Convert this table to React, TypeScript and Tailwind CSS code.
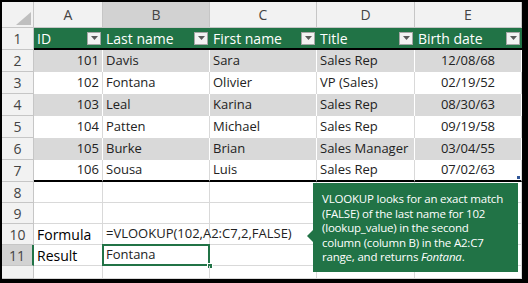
import React from "react";

const rows: [number, string, string, string, string][] = [
  [101, "Davis", "Sara", "Sales Rep", "12/08/68"],
  [102, "Fontana", "Olivier", "VP (Sales)", "02/19/52"],
  [103, "Leal", "Karina", "Sales Rep", "08/30/63"],
  [104, "Patten", "Michael", "Sales Rep", "09/19/58"],
  [105, "Burke", "Brian", "Sales Manager", "03/04/55"],
  [106, "Sousa", "Luis", "Sales Rep", "07/02/63"],
];

const headers = ["ID", "Last name", "First name", "Title", "Birth date"];

const FilterButton = () => (
  <span className="ml-auto mr-[2px] flex h-[13px] w-[14px] shrink-0 items-center justify-center border border-[#a6a6a6] bg-[#f2f2f2]">
    <svg width="7" height="4" viewBox="0 0 7 4">
      <path d="M0 0h7L3.5 4z" fill="#595959" />
    </svg>
  </span>
);

const RowHead = ({ n, selected }: { n: number | string; selected?: boolean }) => (
  <div
    className={
      selected
        ? "flex items-center justify-center border-b border-r-2 border-b-[#c6c6c6] border-r-[#217346] bg-[#d2d2d2] text-[14px] text-[#444]"
        : "flex items-center justify-center border-b border-r border-[#c6c6c6] bg-[#f2f2f2] text-[14px] text-[#444]"
    }
  >
    {n}
  </div>
);

export default function App() {
  return (
    <div className="relative h-[283px] w-[528px] overflow-hidden border-b-4 border-l-2 border-r-[6px] border-t-2 border-black bg-white font-['Open_Sans','Noto_Sans',sans-serif] text-[#222]">
      <div className="grid grid-cols-[32px_69px_107px_107px_98px_107px] grid-rows-[26px_repeat(7,22px)_repeat(4,21px)_13px]">
        {/* column letters */}
        <div className="relative border-b border-r border-[#c6c6c6] bg-[#f2f2f2]">
          <span className="absolute bottom-[2px] right-[2px] h-0 w-0 border-b-[13px] border-l-[15px] border-b-[#bfbfbf] border-l-transparent" />
        </div>
        {["A", "B", "C", "D", "E"].map((c) => (
          <div
            key={c}
            className={
              c === "B"
                ? "flex items-center justify-center border-b border-r border-[#c6c6c6] bg-[#d2d2d2] text-[14px] text-[#444]"
                : "flex items-center justify-center border-b border-r border-[#c6c6c6] bg-[#f2f2f2] text-[14px] text-[#444]"
            }
          >
            {c}
          </div>
        ))}

        {/* table header */}
        <RowHead n={1} />
        {headers.map((h) => (
          <div
            key={h}
            className="flex items-center border-b-2 border-black bg-[#217346] pl-[3px] text-[14px] text-white"
          >
            <span className="whitespace-nowrap">{h}</span>
            <FilterButton />
          </div>
        ))}

        {/* data */}
        {rows.map((r, i) => {
          const band = i % 2 === 0;
          const last = i === rows.length - 1;
          const cell = band
            ? "flex items-center border-r border-white bg-[#d9d9d9] text-[13px] whitespace-nowrap"
            : "flex items-center border-r border-[#d9d9d9] bg-white text-[13px] whitespace-nowrap";
          const edge = last ? " border-b-2 border-b-black" : "";
          return (
            <React.Fragment key={r[0]}>
              <RowHead n={i + 2} />
              <div className={cell + edge + " justify-end pr-[3px]"}>{r[0]}</div>
              <div className={cell + edge + " pl-[3px]"}>{r[1]}</div>
              <div className={cell + edge + " pl-[3px]"}>{r[2]}</div>
              <div className={cell + edge + " pl-[3px]"}>{r[3]}</div>
              <div className={cell + edge + " relative justify-center"}>
                {r[4]}
                {last && (
                  <span className="absolute bottom-[1px] right-[1px] h-[3px] w-[3px] bg-[#2f5597]" />
                )}
              </div>
            </React.Fragment>
          );
        })}

        {/* rows 8 - 12 */}
        {[8, 9, 10, 11, 12].map((n) => (
          <React.Fragment key={n}>
            <RowHead n={n === 12 ? "" : n} selected={n === 11} />
            <div className="flex items-center border-b border-r border-[#d9d9d9] pl-[3px] text-[14px] whitespace-nowrap text-black">
              {n === 10 ? "Formula" : n === 11 ? "Result" : ""}
            </div>
            <div className="relative flex items-center border-b border-r border-[#d9d9d9] pl-[3px] text-[13px] whitespace-nowrap">
              {n === 10 && <span className="absolute left-[3px]">=VLOOKUP(102,A2:C7,2,FALSE)</span>}
              {n === 11 && (
                <>
                  Fontana
                  <span className="absolute -bottom-px -left-px -right-px -top-px border-2 border-[#217346]" />
                  <span className="absolute -bottom-[4px] -right-[4px] h-[6px] w-[6px] border border-white bg-[#217346]" />
                </>
              )}
            </div>
            <div className="border-b border-r border-[#d9d9d9]" />
            <div className="border-b border-r border-[#d9d9d9]" />
            <div className="border-b border-r border-[#d9d9d9]" />
          </React.Fragment>
        ))}
      </div>

      {/* callout */}
      <div className="absolute left-[311px] top-[181px] h-[89px] w-[205px] bg-[#217346] pl-[9px] pt-[9px] text-[11.5px] leading-[14.5px] tracking-[-0.2px] text-white">
        <span className="absolute left-[-6px] top-[47px] h-0 w-0 border-y-[6px] border-r-[6px] border-y-transparent border-r-[#217346]" />
        <div className="whitespace-nowrap">VLOOKUP looks for an exact match</div>
        <div className="whitespace-nowrap">(FALSE) of the last name for 102</div>
        <div className="whitespace-nowrap">(lookup_value) in the second</div>
        <div className="whitespace-nowrap">column (column B) in the A2:C7</div>
        <div className="whitespace-nowrap">
          range, and returns <i>Fontana</i>.
        </div>
      </div>
    </div>
  );
}
